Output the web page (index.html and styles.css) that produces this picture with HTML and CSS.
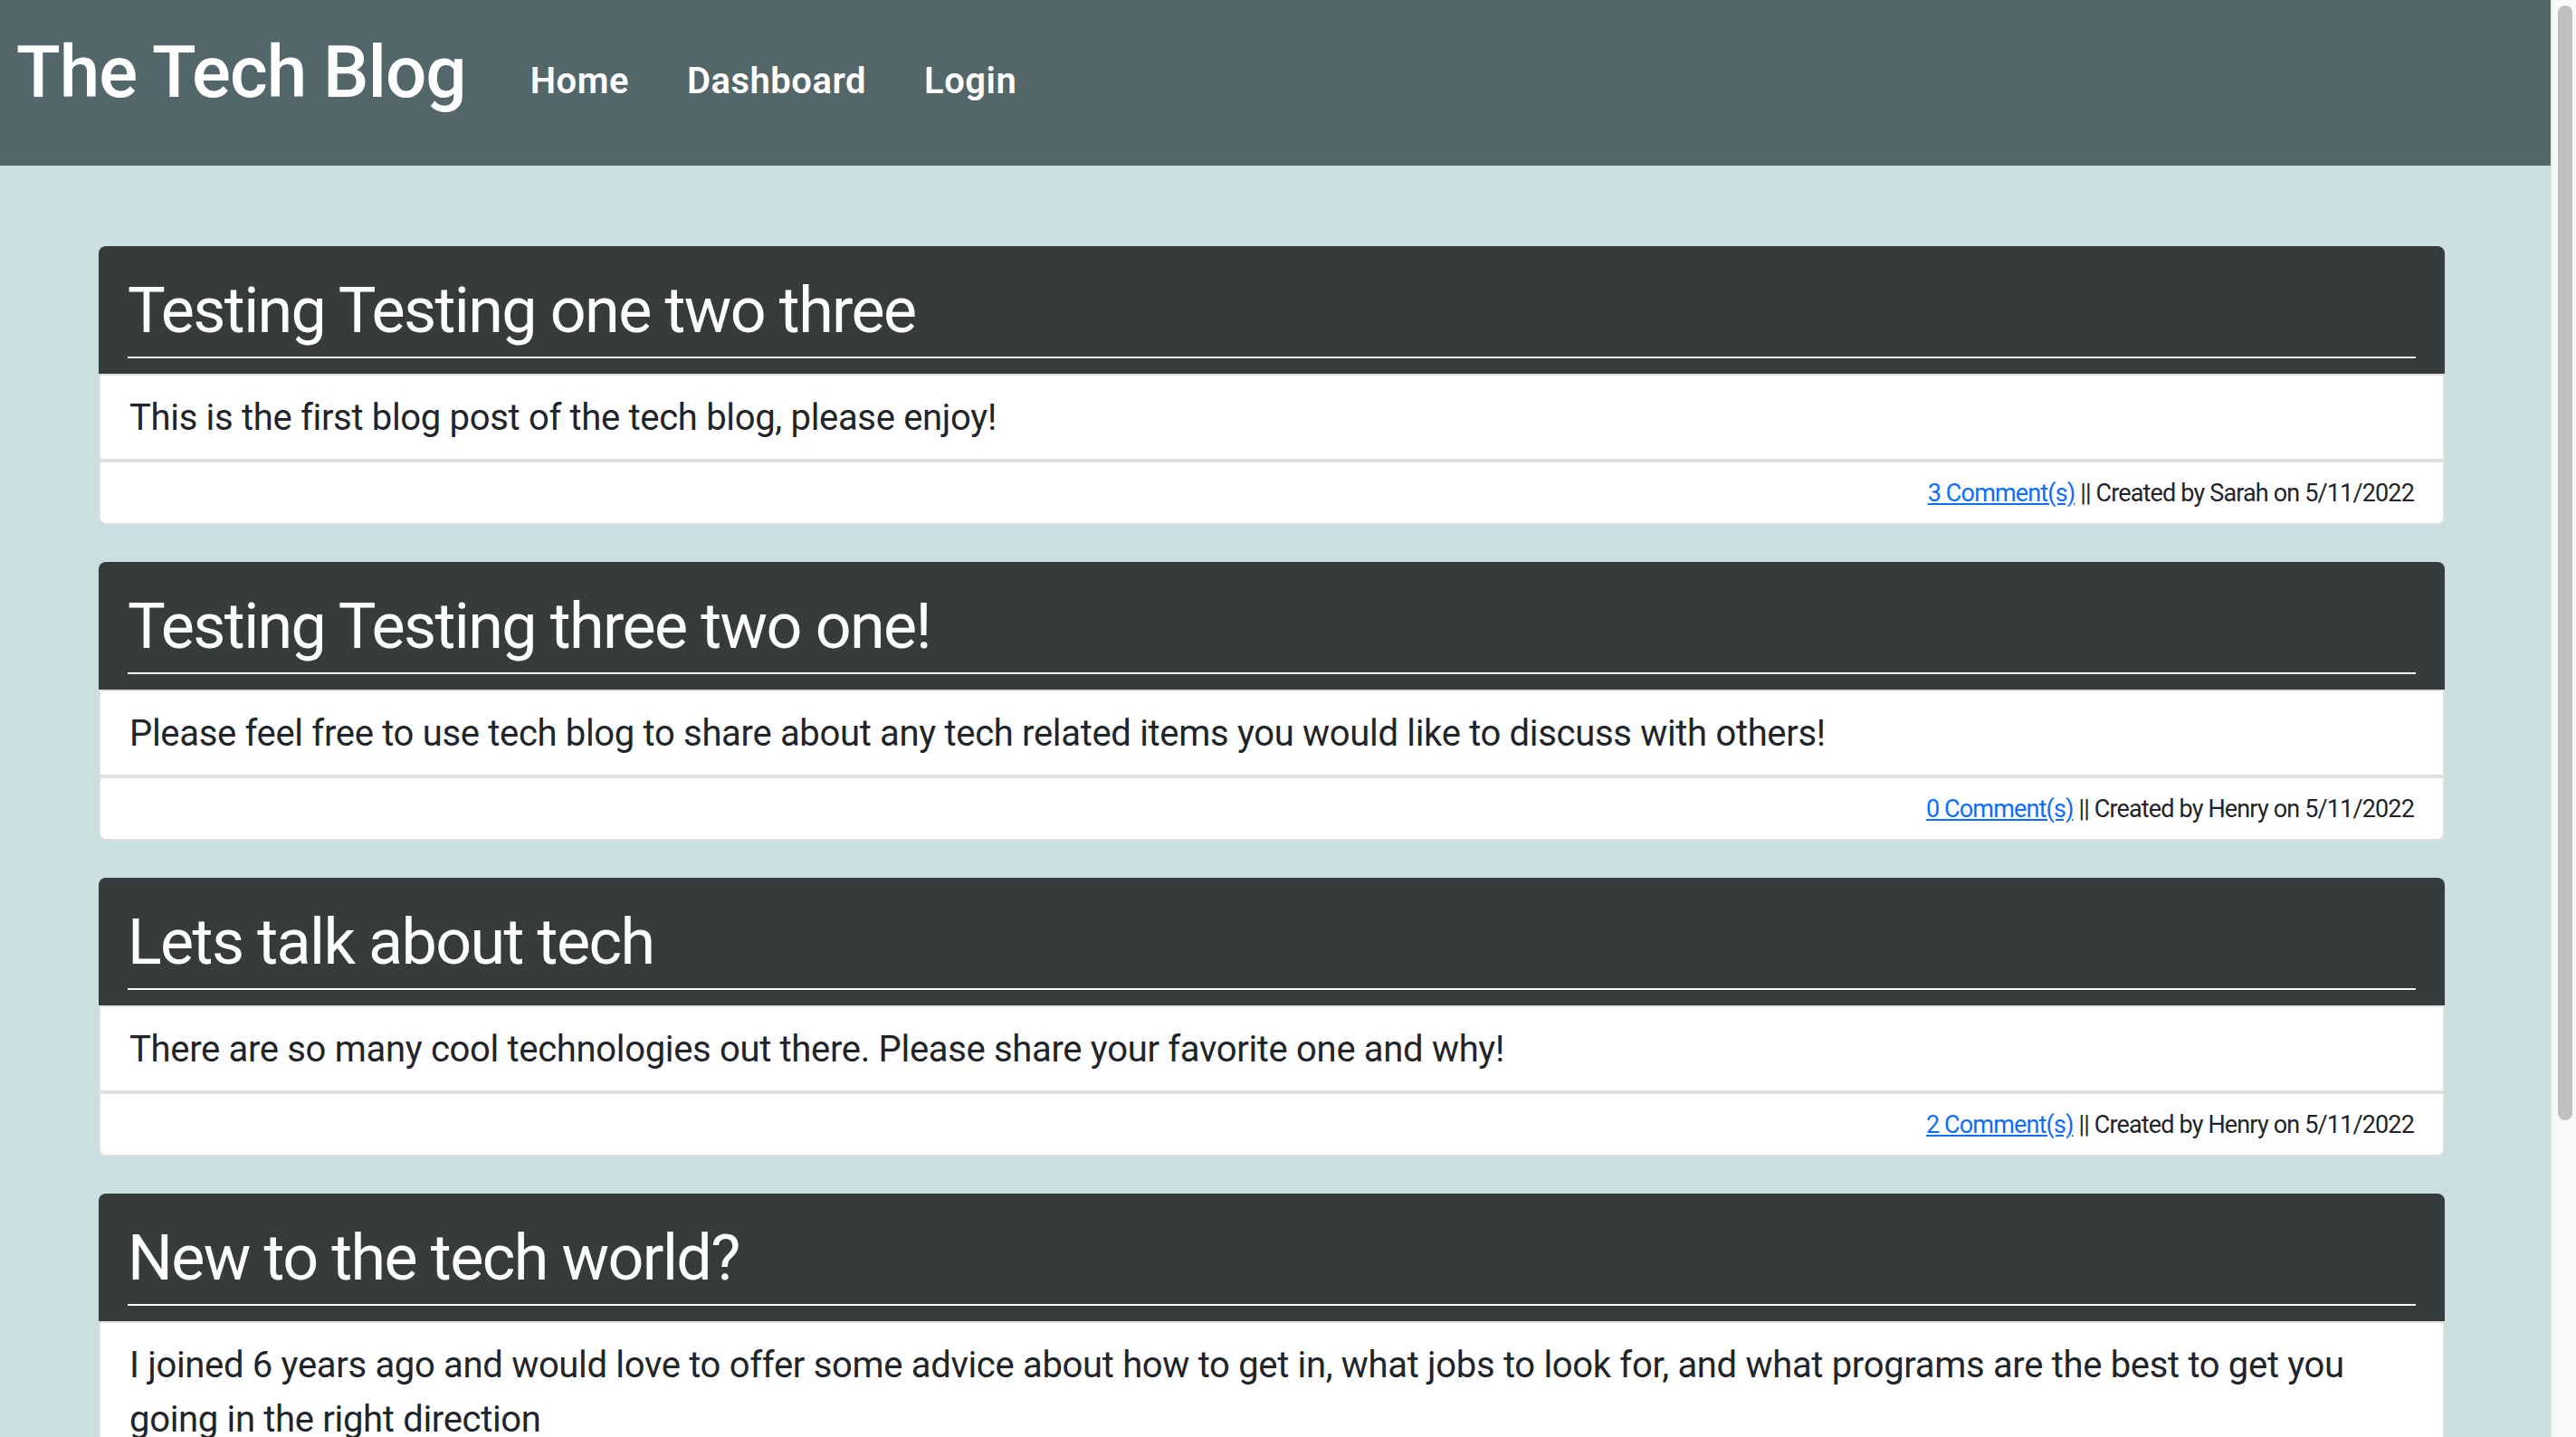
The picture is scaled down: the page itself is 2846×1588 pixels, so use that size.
FILE: index.html
```html
<!DOCTYPE html>
<html lang="en">
<head>
<meta charset="utf-8">
<title>The Tech Blog</title>
<link rel="stylesheet" href="styles.css">
</head>
<body>
<div class="page">
  <header class="site-header">
    <h1 class="brand">The Tech Blog</h1>
    <nav class="nav">
      <a href="#" class="nav-link">Home</a>
      <a href="#" class="nav-link">Dashboard</a>
      <a href="#" class="nav-link">Login</a>
    </nav>
  </header>
  <main class="posts">
    <article class="card">
      <div class="card-header">
        <h2 class="card-title">Testing Testing one two three</h2>
        <hr class="rule">
      </div>
      <div class="card-body">This is the first blog post of the tech blog, please enjoy!</div>
      <div class="card-footer"><a href="#" class="comments">3 Comment(s)</a> || Created by Sarah on 5/11/2022</div>
    </article>
    <article class="card">
      <div class="card-header">
        <h2 class="card-title">Testing Testing three two one!</h2>
        <hr class="rule">
      </div>
      <div class="card-body">Please feel free to use tech blog to share about any tech related items you would like to discuss with others!</div>
      <div class="card-footer"><a href="#" class="comments">0 Comment(s)</a> || Created by Henry on 5/11/2022</div>
    </article>
    <article class="card">
      <div class="card-header">
        <h2 class="card-title">Lets talk about tech</h2>
        <hr class="rule">
      </div>
      <div class="card-body">There are so many cool technologies out there. Please share your favorite one and why!</div>
      <div class="card-footer"><a href="#" class="comments">2 Comment(s)</a> || Created by Henry on 5/11/2022</div>
    </article>
    <article class="card">
      <div class="card-header">
        <h2 class="card-title">New to the tech world?</h2>
        <hr class="rule">
      </div>
      <div class="card-body">I joined 6 years ago and would love to offer some advice about how to get in, what jobs to look for, and what programs are the best to get you going in the right direction</div>
      <div class="card-footer"><a href="#" class="comments">1 Comment(s)</a> || Created by Henry on 5/11/2022</div>
    </article>
  </main>
</div>
<div class="scrollbar"><div class="thumb"></div></div>
</body>
</html>
```
FILE: styles.css
```css
html, body {
  margin: 0;
  padding: 0;
  height: 100%;
  overflow: hidden;
}
body {
  display: flex;
  font-family: Roboto, Inter, "Liberation Sans", sans-serif;
  color: #212529;
  background: #cbdfe1;
}
.page {
  flex: 1;
  min-width: 0;
  background: #cbdfe1;
}
.site-header {
  box-sizing: border-box;
  height: 183px;
  background: #536669;
  display: flex;
  align-items: flex-start;
  padding: 32px 0 0 18px;
}
.brand {
  margin: 0;
  font-size: 80px;
  line-height: 96px;
  font-weight: 500;
  color: #fff;
  letter-spacing: -1px;
}
.nav {
  display: flex;
  margin-left: 39px;
  margin-top: 28px;
}
.nav-link {
  color: #fff;
  text-decoration: none;
  font-size: 40px;
  line-height: 60px;
  font-weight: 600;
  padding: 0 32px;
  letter-spacing: 0.5px;
}
.posts {
  padding: 89px 0 0 109px;
  width: 2592px;
  display: flex;
  flex-direction: column;
  gap: 41px;
}
.card {
  display: flex;
  flex-direction: column;
}
.card-header {
  background: #363b3c;
  border-radius: 8px 8px 0 0;
  padding: 29px 32px 17px;
}
.card-title {
  margin: 0;
  font-size: 70px;
  line-height: 84px;
  font-weight: 400;
  color: #fff;
  letter-spacing: -1.6px;
}
.rule {
  margin: 9px 0 0;
  border: 0;
  height: 2px;
  background: #fff;
}
.card-body {
  background: #fff;
  border: 2px solid #dfdfdf;
  border-bottom: 0;
  padding: 17px 32px 15px;
  font-size: 40px;
  line-height: 60px;
  letter-spacing: -0.32px;
}
.card-footer {
  background: #fff;
  border: 2px solid #dfdfdf;
  border-top-width: 4px;
  border-radius: 0 0 8px 8px;
  padding: 13px 32px 12px;
  font-size: 27px;
  line-height: 42px;
  text-align: right;
  letter-spacing: -0.85px;
}
.comments {
  color: #0d6efd;
  text-decoration: underline;
}
.scrollbar {
  flex: 0 0 28px;
  height: 100%;
  background: #f9f9f9;
  border-left: 2px solid #ebebeb;
  padding: 6px 0 0 6px;
  box-sizing: border-box;
}
.thumb {
  width: 16px;
  height: 1232px;
  border-radius: 8px;
  background: #c1c1c1;
}
```
